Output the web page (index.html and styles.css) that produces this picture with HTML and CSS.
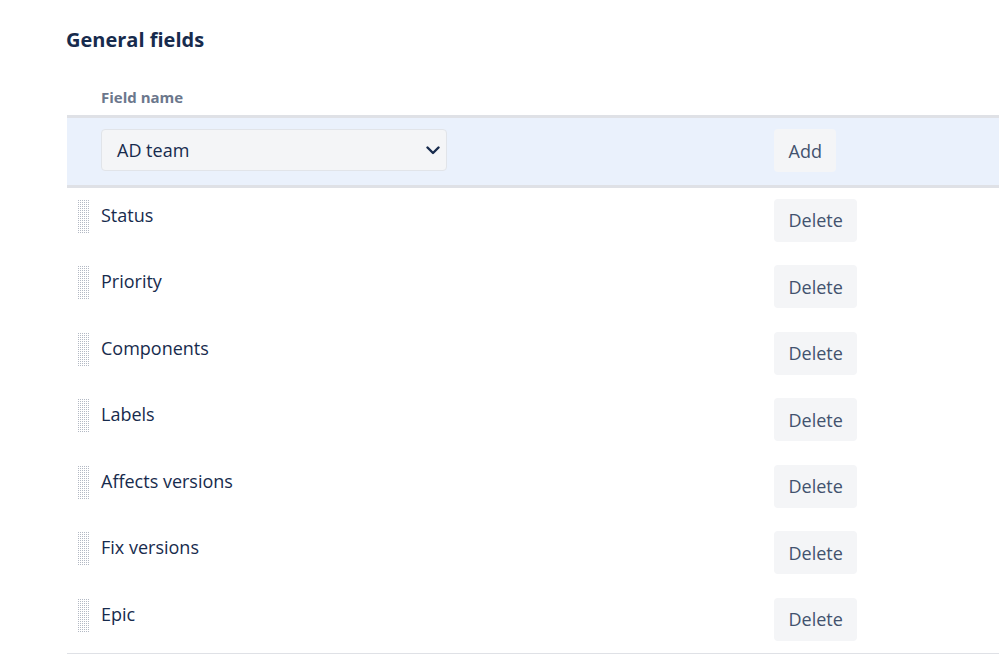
FILE: index.html
```html
<!DOCTYPE html>
<html lang="en">
<head>
<meta charset="utf-8">
<title>General fields</title>
<link rel="stylesheet" href="styles.css">
</head>
<body>
<main class="page">
  <h2 class="title">General fields</h2>
  <div class="table">
    <div class="thead">
      <span class="th">Field name</span>
    </div>
    <div class="row row-add">
      <div class="cell-name">
        <div class="select">
          <span>AD team</span>
          <svg class="chev" width="14" height="9" viewBox="0 0 14 9"><path d="M1.5 1.5 L7 7 L12.5 1.5" fill="none" stroke="#172b4d" stroke-width="2.4" stroke-linecap="round" stroke-linejoin="round"/></svg>
        </div>
      </div>
      <div class="cell-action"><button class="btn">Add</button></div>
    </div>
    <div class="row"><div class="cell-name"><span class="handle"></span><span class="label">Status</span></div><div class="cell-action"><button class="btn">Delete</button></div></div>
    <div class="row"><div class="cell-name"><span class="handle"></span><span class="label">Priority</span></div><div class="cell-action"><button class="btn">Delete</button></div></div>
    <div class="row"><div class="cell-name"><span class="handle"></span><span class="label">Components</span></div><div class="cell-action"><button class="btn">Delete</button></div></div>
    <div class="row"><div class="cell-name"><span class="handle"></span><span class="label">Labels</span></div><div class="cell-action"><button class="btn">Delete</button></div></div>
    <div class="row"><div class="cell-name"><span class="handle"></span><span class="label">Affects versions</span></div><div class="cell-action"><button class="btn">Delete</button></div></div>
    <div class="row"><div class="cell-name"><span class="handle"></span><span class="label">Fix versions</span></div><div class="cell-action"><button class="btn">Delete</button></div></div>
    <div class="row row-last"><div class="cell-name"><span class="handle"></span><span class="label">Epic</span></div><div class="cell-action"><button class="btn">Delete</button></div></div>
  </div>
</main>
</body>
</html>
```

FILE: styles.css
```css
html, body {
  margin: 0;
  padding: 0;
  background: #ffffff;
  overflow: hidden;
}
body {
  font-family: "Open Sans", "Noto Sans", "Liberation Sans", sans-serif;
  color: #172b4d;
  width: 999px;
  height: 654px;
}
.page {
  padding-left: 66px;
  overflow: hidden;
}
.title {
  margin: 0;
  padding-top: 26px;
  font-size: 20px;
  line-height: 28px;
  font-weight: 700;
  color: #172b4d;
}
.table {
  margin-left: 1px;
  width: 932px;
}
.thead {
  height: 61px;
  display: flex;
  align-items: center;
  padding-left: 34px;
  box-sizing: border-box;
  padding-top: 25px;
}
.th {
  font-size: 15px;
  font-weight: 700;
  color: #6b778c;
}
.row {
  display: flex;
  height: 66.5px;
  box-sizing: border-box;
  padding-top: 10.5px;
}
.row-last {
  border-bottom: 1.5px solid #dfe1e6;
}
.row-add {
  height: 73px;
  border-top: 3px solid #dfe1e6;
  border-bottom: 3px solid #dfe1e6;
  background: #eaf1fc;
  padding-top: 11px;
}
.cell-name {
  width: 707px;
  display: flex;
  align-items: flex-start;
  padding-left: 11px;
  box-sizing: border-box;
}
.row-add .cell-name {
  padding-left: 34px;
}
.handle {
  width: 12px;
  height: 33px;
  margin-top: 1px;
  margin-right: 11px;
  background-color: #b3b9c4;
  background-image:
    linear-gradient(90deg, transparent 1px, #ffffff 1px),
    linear-gradient(transparent 1px, #ffffff 1px);
  background-size: 2px 2px, 2px 2px;
}
.label {
  font-size: 18px;
  line-height: 32px;
  color: #172b4d;
}
.select {
  width: 346px;
  height: 42px;
  box-sizing: border-box;
  border: 1.5px solid #e1e4e9;
  border-radius: 4px;
  background: #f4f5f7;
  display: flex;
  align-items: center;
  justify-content: space-between;
  padding: 0 6px 0 15px;
  font-size: 18px;
  color: #172b4d;
}
.cell-action {
  display: flex;
}
.btn {
  font-family: inherit;
  font-size: 18px;
  color: #42526e;
  background: #f4f5f7;
  border: none;
  border-radius: 4px;
  height: 43px;
  padding: 0 14.5px;
  margin: 0;
  cursor: pointer;
}
```
